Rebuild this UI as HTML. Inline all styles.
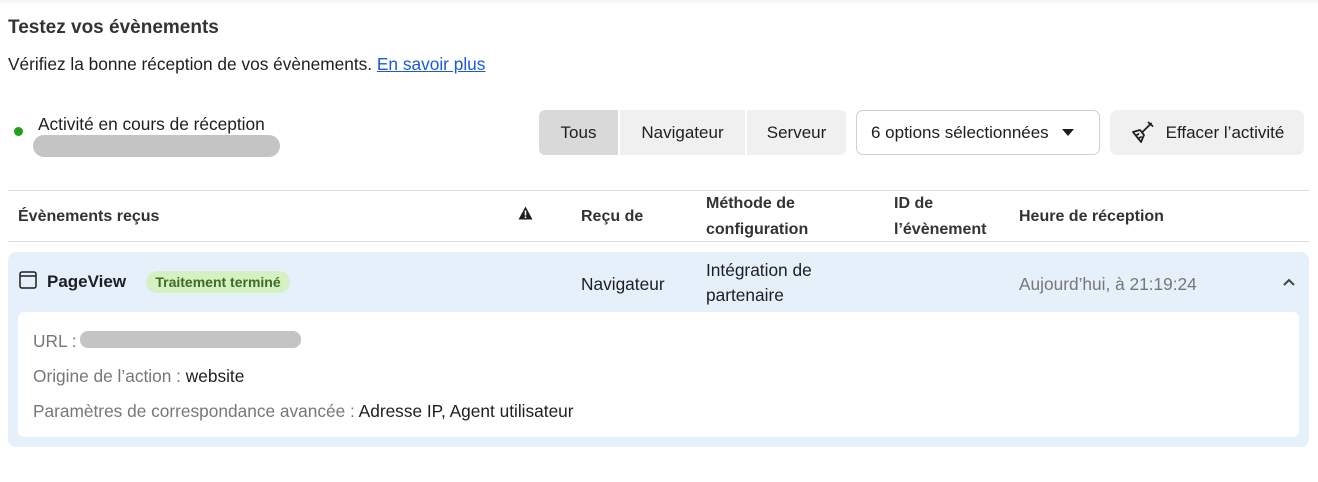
<!DOCTYPE html>
<html><head><meta charset="utf-8"><style>
*{margin:0;padding:0;box-sizing:border-box}
body{width:1318px;height:482px;background:#fff;font-family:"Liberation Sans",sans-serif;color:#1c1e21;position:relative;overflow:hidden;font-size:17.3px}
.a{position:absolute;white-space:nowrap;line-height:20px}
.b{font-weight:bold;color:#333;font-size:16px}
.btn{position:absolute;top:110px;height:45px;background:#f0f0f0;display:flex;align-items:center;justify-content:center;font-size:17px;color:#1c1e21}
.g{color:#777}
</style></head><body>
<div style="position:absolute;left:0;top:0;width:1318px;height:4px;background:linear-gradient(#f2f2f2,#fff)"></div>
<div class="a b" style="left:8px;top:18px;font-size:19px">Testez vos évènements</div>
<div class="a" style="left:8px;top:54px">Vérifiez la bonne réception de vos évènements. <span style="color:#1a5ad7;text-decoration:underline">En savoir plus</span></div>
<div style="position:absolute;left:14px;top:127px;width:9px;height:9px;border-radius:50%;background:#22a01c"></div>
<div class="a" style="left:38px;top:114px">Activité en cours de réception</div>
<div style="position:absolute;left:33px;top:135px;width:247px;height:22px;border-radius:11px;background:#c4c4c4"></div>
<div class="btn" style="left:539px;width:79px;background:#d9d9d9;border-radius:6px 0 0 6px">Tous</div>
<div class="btn" style="left:620px;width:125px">Navigateur</div>
<div class="btn" style="left:747px;width:99px;border-radius:0 6px 6px 0">Serveur</div>
<div class="btn" style="left:856px;width:244px;background:#fff;border:1px solid #d0d0d0;border-radius:7px;justify-content:flex-start;padding-left:14px">6 options sélectionnées<svg style="margin-left:13px" width="12" height="8" viewBox="0 0 12 8"><path d="M0 0H12L6 7Z" fill="#1c1e21"/></svg></div>
<div class="btn" style="left:1110px;width:194px;border-radius:7px"><svg width="26" height="26" viewBox="0 0 26 26" style="margin-right:10px" fill="none" stroke="#1c1e21" stroke-width="1.8" stroke-linejoin="round" stroke-linecap="round"><path d="M3 12L11 22L14 15L10 10Z"/><path d="M6 15.5L8.5 14"/><path d="M8 18.5L11 17"/><path d="M12 12.5L21 3.5"/><path d="M18.5 2.5L22.5 6"/></svg>Effacer l’activité</div>
<div style="position:absolute;left:8px;top:190px;width:1301px;height:1px;background:#ddd"></div>
<div style="position:absolute;left:8px;top:241px;width:1301px;height:1px;background:#ddd"></div>
<div class="a b" style="left:18px;top:207px">Évènements reçus</div>
<svg style="position:absolute;left:518px;top:206px" width="15" height="14" viewBox="0 0 15 14"><path d="M7.5 0.5L14.5 13.5H0.5Z" fill="#1c1e21"/><rect x="6.7" y="4.5" width="1.6" height="5" fill="#fff"/><rect x="6.7" y="10.5" width="1.6" height="1.6" fill="#fff"/></svg>
<div class="a b" style="left:581px;top:207px">Reçu de</div>
<div class="a b" style="left:706px;top:191px;line-height:26px">Méthode de<br>configuration</div>
<div class="a b" style="left:894px;top:191px;line-height:26px">ID de<br>l’évènement</div>
<div class="a b" style="left:1019px;top:207px">Heure de réception</div>
<div style="position:absolute;left:8px;top:252px;width:1301px;height:195px;background:#e6f0fb;border-radius:8px"></div>
<div style="position:absolute;left:18px;top:312px;width:1281px;height:125px;background:#fff;border-radius:6px"></div>
<svg style="position:absolute;left:19px;top:271px" width="18" height="18" viewBox="0 0 18 18" fill="none" stroke="#1c1e21" stroke-width="1.5"><rect x="1" y="1" width="16" height="16" rx="2"/><path d="M1 5H17"/></svg>
<div class="a b" style="left:47px;top:272px;color:#1c1e21;font-size:17px">PageView</div>
<div class="a" style="left:146px;top:271px;height:22px;width:144px;border-radius:11px;background:#d5f0c3;color:#3b6e1f;font-weight:bold;font-size:14px;text-align:center;line-height:22px">Traitement terminé</div>
<div class="a" style="left:581px;top:274px">Navigateur</div>
<div class="a" style="left:706px;top:258px;line-height:25px">Intégration de<br>partenaire</div>
<div class="a g" style="left:1019px;top:274px">Aujourd’hui, à 21:19:24</div>
<svg style="position:absolute;left:1283px;top:278px" width="12" height="8" viewBox="0 0 12 8"><path d="M1 7L6 2L11 7" fill="none" stroke="#444" stroke-width="2"/></svg>
<div class="a g" style="left:33px;top:331px">URL :</div>
<div style="position:absolute;left:80px;top:331px;width:221px;height:17px;border-radius:8px;background:#c4c4c4"></div>
<div class="a" style="left:33px;top:366px"><span class="g">Origine de l’action :</span> website</div>
<div class="a" style="left:33px;top:401px"><span class="g">Paramètres de correspondance avancée :</span> Adresse IP, Agent utilisateur</div>
</body></html>
